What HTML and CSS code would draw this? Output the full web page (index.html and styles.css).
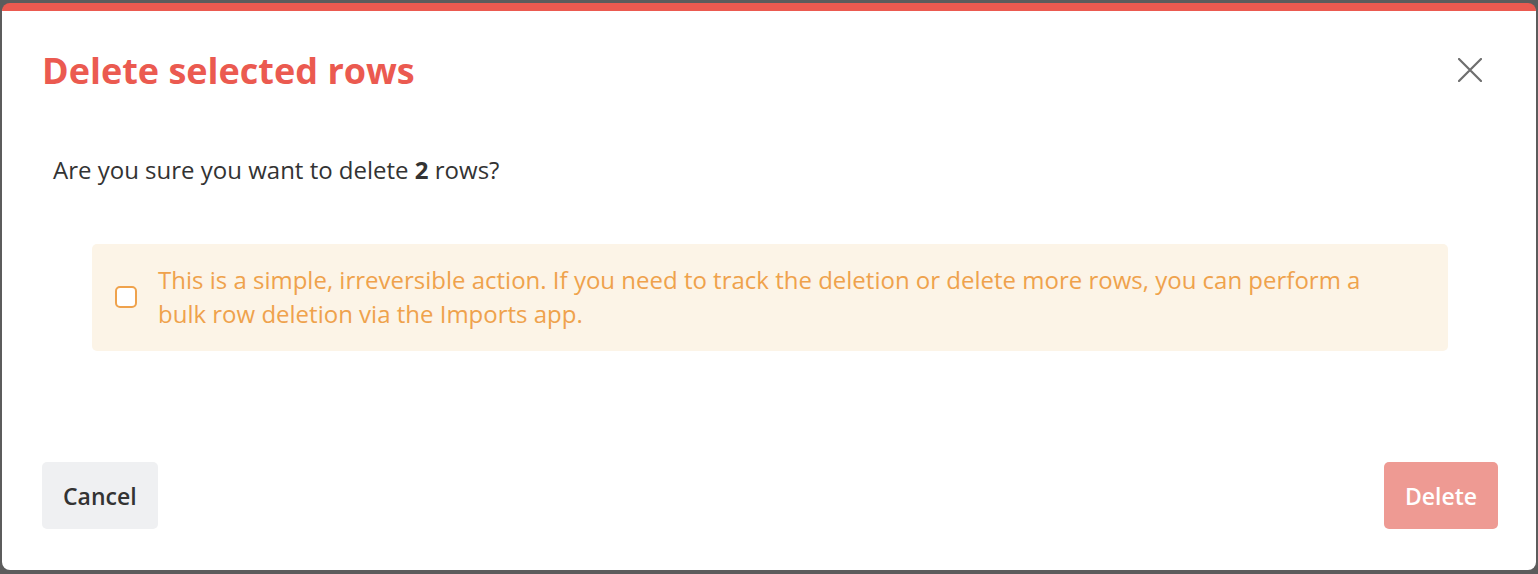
FILE: index.html
```html
<!DOCTYPE html>
<html>
<head>
<meta charset="utf-8">
<link rel="stylesheet" href="styles.css">
</head>
<body>
<div class="modal">
  <div class="modal-header">
    <h1 class="title">Delete selected rows</h1>
    <button class="close" aria-label="Close">
      <svg width="24" height="24" viewBox="0 0 24 24"><path d="M1 1L23 23M23 1L1 23" stroke="#6e6e6e" stroke-width="2.2" stroke-linecap="round" fill="none"/></svg>
    </button>
  </div>
  <div class="modal-body">
    <p class="question">Are you sure you want to delete <strong>2</strong> rows?</p>
    <div class="notice">
      <span class="checkbox"></span>
      <p class="notice-text">This is a simple, irreversible action. If you need to track the deletion or delete more rows, you can perform a bulk row deletion via the Imports app.</p>
    </div>
  </div>
  <div class="modal-footer">
    <button class="btn btn-cancel">Cancel</button>
    <button class="btn btn-delete">Delete</button>
  </div>
</div>
</body>
</html>
```

FILE: styles.css
```css
html, body {
  margin: 0;
  padding: 0;
  height: 100%;
}
body {
  background: #5c5c5c;
  font-family: "Open Sans", "Liberation Sans", sans-serif;
  padding: 3px 2px 4px 2px;
  box-sizing: border-box;
}
.modal {
  height: 100%;
  background: #fff;
  border-top: 8px solid #eb5a50;
  border-radius: 8px;
  box-sizing: border-box;
  display: flex;
  flex-direction: column;
  padding: 0 38px 0 40px;
}
.modal-header {
  display: flex;
  align-items: center;
  justify-content: space-between;
  padding-top: 35px;
}
.title {
  margin: 0;
  font-size: 36px;
  line-height: 50px;
  font-weight: 700;
  color: #eb5a50;
}
.close {
  border: none;
  background: none;
  padding: 0;
  margin-right: 16px;
  margin-bottom: 2px;
  width: 24px;
  height: 24px;
  cursor: pointer;
}
.close svg { display: block; }
.modal-body {
  flex: 1;
  padding-top: 57px;
}
.question {
  margin: 0 0 0 11px;
  font-size: 24px;
  line-height: 34px;
  color: #333;
}
.question strong { font-weight: 700; }
.notice {
  margin: 57px 50px 0 50px;
  background: #fcf4e7;
  border-radius: 5px;
  display: flex;
  align-items: center;
  padding: 19px 24px 20px 23px;
  gap: 21px;
}
.checkbox {
  flex: none;
  width: 18px;
  height: 18px;
  border: 2px solid #efa24c;
  border-radius: 5px;
  background: #fff;
}
.notice-text {
  margin: 0;
  font-size: 24px;
  line-height: 34px;
  color: #efa24c;
  max-width: 1220px;
}
.modal-footer {
  display: flex;
  justify-content: space-between;
  padding-bottom: 41px;
}
.btn {
  border: none;
  border-radius: 5px;
  font-family: "Open Sans", "Liberation Sans", sans-serif;
  font-size: 23px;
  font-weight: 600;
  height: 67px;
  padding: 0 21px;
}
.btn-cancel {
  background: #eff0f2;
  color: #333;
}
.btn-delete {
  background: #ee9a93;
  color: #fff;
}
```
